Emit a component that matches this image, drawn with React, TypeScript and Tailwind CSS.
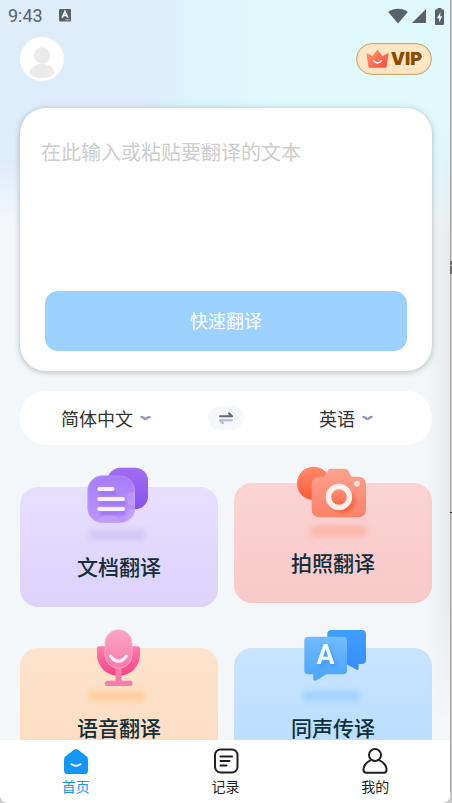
import { useState } from 'react'
import type { ReactNode } from 'react'

function StatusBar() {
  return (
    <div className="flex h-8 items-center pl-2 pr-[6px] text-[#5b6265]">
      <span className="font-['Roboto',sans-serif] text-[18px] leading-8">9:43</span>
      <svg className="ml-4 h-[14px] w-3" viewBox="0 0 12 14" aria-hidden="true">
        <rect width="12" height="12.5" rx="1" fill="currentColor" />
        <path d="M3.2 8.6 6 2.4l2.8 6.2M4.3 6.6h3.400" fill="none" stroke="#fff" strokeWidth="1.5" />
        <path d="M6.5 10.800h4" stroke="#dfecfa" strokeWidth="1" strokeDasharray="1 .6" />
      </svg>
      <div className="ml-auto flex items-center">
        <svg className="h-4 w-5" viewBox="0 0 20 16" fill="currentColor" aria-hidden="true">
          <path d="M10 15.500 .2 4C5.500-.3 14.500-.3 19.800 4z" />
        </svg>
        <svg className="ml-1 h-[14px] w-[14px]" viewBox="0 0 14 14" fill="currentColor" aria-hidden="true">
          <path d="M14 0v14H0z" />
        </svg>
        <svg className="ml-[9px] h-[17px] w-[9px]" viewBox="0 0 9 17" aria-hidden="true">
          <path d="M2.500 0h4v1.500H8q1 0 1 1V16q0 1-1 1H1q-1 0-1-1V2.500q0-1 1-1h1.500z" fill="currentColor" />
          <path d="M5.500 4 2 10.300h2.200V14.500l3-6.200H5.200z" fill="#e0fafc" />
        </svg>
      </div>
    </div>
  )
}

function Header() {
  return (
    <header className="flex items-center justify-between pt-[5px]">
      <button type="button" aria-label="我的" className="h-11 w-11 overflow-hidden rounded-full bg-white">
        <svg viewBox="0 0 44 44" fill="#ebebeb">
          <circle cx="22" cy="18.500" r="8.200" />
          <path d="M8.800 35.800C11.500 30 16 26.800 22 26.800s10.800 3.200 13.400 9C31.500 39.500 27 41.300 22 41.300s-9.500-1.800-13.200-5.500z" />
        </svg>
      </button>
      <button
        type="button"
        className="flex h-8 w-[76px] items-center justify-center gap-[2px] rounded-full border border-[#c9a873] bg-[#ffe6c4] shadow-[inset_0_0_2px_#d9bd8d]"
      >
        <svg className="h-[18px] w-[23px]" viewBox="0 0 23 18" aria-hidden="true">
          <defs>
            <linearGradient id="crown" x1="0" y1="0" x2="1" y2="1">
              <stop offset="0" stopColor="#ff9b6b" />
              <stop offset="1" stopColor="#fb4740" />
            </linearGradient>
          </defs>
          <path d="M.5 3.800q0-.8 1-.5L6.500 6l4.200-5.500q.8-.9 1.600 0L16.500 6l5-2.700q1-.3 1 .7L20.500 17q-.1.800-1 .800h-16q-.9 0-1-.8z" fill="url(#crown)" />
          <path d="M7.500 10.800q4 4.400 8 0" fill="none" stroke="#fff" strokeWidth="1.400" strokeLinecap="round" />
        </svg>
        <span className="font-['Inter',sans-serif] text-[18px] font-black leading-5 text-[#884c02]">VIP</span>
      </button>
    </header>
  )
}

function Chevron() {
  return (
    <svg className="pointer-events-none h-[6px] w-[11px]" viewBox="0 0 11 6" aria-hidden="true">
      <path d="M1.500 2q1.500 0 2.500 1.200 1.500 1.200 3 0Q8 2 9.500 2" fill="none" stroke="#9a9bb8" strokeWidth="2.600" strokeLinecap="round" />
    </svg>
  )
}

interface LanguageSelectProps {
  label: string
  value: string
  onChange: (value: string) => void
}

function LanguageSelect({ label, value, onChange }: LanguageSelectProps) {
  return (
    <label className="flex items-center gap-[7px]">
      <select
        aria-label={label}
        value={value}
        onChange={(e) => onChange(e.target.value)}
        className="field-sizing-content appearance-none bg-transparent pb-px text-[18px] leading-6 text-[#333] outline-none"
      >
        <option>简体中文</option>
        <option>英语</option>
      </select>
      <Chevron />
    </label>
  )
}

function LanguageBar() {
  const [from, setFrom] = useState('简体中文')
  const [to, setTo] = useState('英语')

  const swap = () => {
    setFrom(to)
    setTo(from)
  }

  return (
    <div className="mt-5 grid h-[54px] grid-cols-[1fr_auto_1fr] items-center rounded-[26px] bg-white">
      <div className="flex justify-center pr-4">
        <LanguageSelect label="源语言" value={from} onChange={setFrom} />
      </div>
      <button
        type="button"
        aria-label="交换语言"
        onClick={swap}
        className="flex h-6 w-9 items-center justify-center rounded-xl bg-[#f5f7fa]"
      >
        <svg className="h-[14px] w-[14px]" viewBox="0 0 14 14" fill="none" strokeWidth="2" strokeLinecap="round" strokeLinejoin="round">
          <path d="M1 5.300h12L10 2.300" stroke="#65667f" />
          <path d="M13 9.300H1l3 3" stroke="#b3b9c9" />
        </svg>
      </button>
      <div className="flex justify-center pl-4">
        <LanguageSelect label="目标语言" value={to} onChange={setTo} />
      </div>
    </div>
  )
}

interface FeatureCardProps {
  title: string
  className: string
  shadow: string
  shadowX?: number
  children: ReactNode
}

function FeatureCard({ title, className, shadow, shadowX = 20, children }: FeatureCardProps) {
  return (
    <button type="button" className={`flex h-[120px] flex-col items-center rounded-[18px] bg-linear-to-b ${className}`}>
      <svg className="-mt-6 h-[92px] w-[100px] shrink-0" viewBox="0 0 100 92" aria-hidden="true">
        <rect x={shadowX} y="67" width="56" height="10" rx="3" fill={shadow} filter="url(#soft)" />
        {children}
      </svg>
      <span className="text-[21px] font-medium leading-[22px] text-[#12303a]">{title}</span>
    </button>
  )
}

function Gradients() {
  const list = [
    ['docBack', '#a06df5', '#8a52e8'],
    ['docFront', '#a77cf8', '#bb97fb'],
    ['camBack', '#ff8a6b', '#fb5c35'],
    ['camFront', '#fca18f', '#fd8168'],
    ['camLens', '#ff9a84', '#fb6240'],
    ['micBack', '#fb7eb0', '#fc3f82'],
    ['micFront', '#fca4c6', '#f87cab'],
    ['talkBack', '#3f9ffd', '#3a8dff'],
    ['talkFront', '#71bbff', '#4aa5fb'],
  ]
  return (
    <svg className="absolute h-0 w-0" aria-hidden="true">
      <defs>
        {list.map(([id, top, bottom]) => (
          <linearGradient key={id} id={id} x1="0" y1="0" x2="0" y2="1">
            <stop offset="0" stopColor={top} />
            <stop offset="1" stopColor={bottom} />
          </linearGradient>
        ))}
        <filter id="soft" x="-30%" y="-100%" width="160%" height="300%">
          <feGaussianBlur stdDeviation="3" />
        </filter>
        <filter id="drop" x="-30%" y="-50%" width="160%" height="200%">
          <feGaussianBlur stdDeviation="1.800" />
        </filter>
        <clipPath id="docClip">
          <rect x="18.500" y="12.500" width="47.500" height="47.500" rx="15" />
        </clipPath>
      </defs>
    </svg>
  )
}

function DocIcon() {
  return (
    <>
      <rect x="38.500" y="4.700" width="40.500" height="41.600" rx="13" fill="url(#docBack)" />
      <rect x="18.500" y="12.500" width="47.500" height="47.500" rx="15" fill="url(#docFront)" />
      <g clipPath="url(#docClip)" fill="#c9adfc" opacity=".4">
        <circle cx="64" cy="36" r="7" />
        <circle cx="62" cy="53" r="7" />
        <circle cx="40" cy="66" r="14" />
      </g>
      <path d="M31 30h16M31 40h26M31 50h26" stroke="#8450e2" strokeWidth="4" opacity=".4" filter="url(#drop)" />
      <path d="M30.300 26h13.200M30.300 36H54M30.300 46H54" stroke="#f6f0ff" strokeWidth="4" strokeLinecap="round" />
      <rect x="19" y="13" width="46.500" height="46.500" rx="14.500" fill="none" stroke="#cdb4ff" strokeWidth=".8" opacity=".4" />
    </>
  )
}

function CameraIcon() {
  return (
    <>
      <circle cx="30.700" cy="24.400" r="16.700" fill="url(#camBack)" />
      <path
        d="M36.700 17.700H40q1.500 0 2.300-1.500l2.200-4.300q1-2.200 3.500-2.200h14q2.500 0 3.500 2.200l2.200 4.300q.8 1.500 2.300 1.500H75q8 0 8 8v24.600q0 8-8 8H36.700q-8 0-8-8V25.700q0-8 8-8z"
        fill="url(#camFront)"
      />
      <circle cx="60" cy="42" r="12" fill="#fb5630" opacity=".7" filter="url(#drop)" />
      <circle cx="56" cy="38" r="10.500" fill="url(#camLens)" stroke="#fff0ec" strokeWidth="5.400" />
      <circle cx="74" cy="24.700" r="2.900" fill="#ffe2da" />
    </>
  )
}

function MicIcon() {
  return (
    <>
      <path d="M28 24.300q0-2 2-2h39q2 0 2 2v6.200a21.500 21.500 0 0 1-43 0z" fill="url(#micBack)" />
      <path d="M46.500 43h6v13.700H61q2.500 0 2.500 2.700T61 62H38.500Q36 62 36 59.400t2.500-2.700h8z" fill="#f97dac" />
      <rect x="36" y="5.700" width="27" height="38.600" rx="13.500" fill="url(#micFront)" stroke="#fdb1cd" strokeWidth=".8" />
      <path d="M41.500 32q8 10.500 16 0" fill="none" stroke="#fff1f6" strokeWidth="3" strokeLinecap="round" />
    </>
  )
}

function TalkIcon() {
  return (
    <>
      <path d="M48.300 6H79q4 0 4 4v26q0 4-4 4h-3.500v4.500q0 2-2 1.200L63 40H48.300q-4 0-4-4V10q0-4 4-4z" fill="url(#talkBack)" />
      <path d="M25.300 12.700H60q4 0 4 4v29.600q0 4-4 4H43.500L33 56.500q-2.500.8-2.700-1.500v-4.700h-5q-4 0-4-4V16.700q0-4 4-4z" fill="url(#talkFront)" />
      <text
        x="42.500"
        y="40"
        textAnchor="middle"
        className="fill-[#f1f8ff] font-['Roboto',sans-serif] text-[27px] font-bold drop-shadow-[2px_3px_2px_rgba(31,123,232,0.5)]"
      >
        A
      </text>
    </>
  )
}

interface TabProps {
  label: string
  active?: boolean
  children: ReactNode
}

function Tab({ label, active = false, children }: TabProps) {
  return (
    <a
      href="#"
      aria-current={active ? 'page' : undefined}
      className={`flex flex-1 flex-col items-center text-[14px] leading-6 ${active ? 'text-[#1296fa]' : 'text-[#231f20]'}`}
    >
      <svg className="h-[26px] w-[26px]" viewBox="0 0 26 26" fill="none" stroke="currentColor" strokeWidth="2" strokeLinecap="round" aria-hidden="true">
        {children}
      </svg>
      {label}
    </a>
  )
}

function TabBar() {
  return (
    <nav className="flex h-[63px] shrink-0 bg-white pl-px pt-2">
      <Tab label="首页" active>
        <path
          d="M11 1.700q2-1.400 4 0l8.500 6.600Q25 9.500 25 11.500V22q0 4.500-4.500 4.500h-15Q1 26.500 1 22V11.500q0-2 1.500-3.200z"
          fill="currentColor"
          stroke="none"
        />
        <path d="M8.500 16.200q4.500 3.200 9 0" stroke="#fff" />
      </Tab>
      <Tab label="记录">
        <rect x="2" y="1.500" width="22.500" height="23" rx="5.500" />
        <path d="M7.500 8.500h11.500M7.500 13h9M7.500 17.500h6" />
      </Tab>
      <Tab label="我的">
        <circle cx="13" cy="7" r="6" />
        <path d="M8 12.700C4.300 14.500 1.500 18 1.500 22q0 2.800 2.800 2.800h17.400q2.800 0 2.800-2.800c0-4-2.800-7.500-6.500-9.300" />
      </Tab>
    </nav>
  )
}

export default function App() {
  const [text, setText] = useState('')

  return (
    <div className="relative h-screen overflow-hidden bg-[#c9c9c9] pr-[2px] font-['Noto_Sans_CJK_SC',sans-serif]">
      <div className="relative flex h-full flex-col overflow-hidden rounded-b-lg bg-[#f3f7fa]">
        <main className="min-h-0 flex-1 overflow-hidden bg-[linear-gradient(to_bottom,transparent_160px,#f3f7fa_222px),linear-gradient(to_right,#dfecfa_0,#dfecfa_145px,#dcf4fa_190px,#dcf6fa_235px,#e0fafc_270px,#e0fafc_100%)]">
          <Gradients />
          <StatusBar />
          <div className="pl-5 pr-[18px]">
            <Header />

            <section className="mt-[27px] rounded-[26px] bg-white px-[25px] pb-5 pt-[29px] shadow-[0_1px_6px_rgba(0,0,0,0.26)]">
              <textarea
                aria-label="翻译文本"
                value={text}
                onChange={(e) => setText(e.target.value)}
                placeholder="在此输入或粘贴要翻译的文本"
                className="-mx-1 block h-[154px] w-full resize-none bg-transparent text-[20px] leading-[30px] text-[#333] outline-none placeholder:text-[#cdcdcd]"
              />
              <button type="button" className="h-[60px] w-full rounded-[13px] bg-[#9bd1fc] pb-[2px] text-[18px] text-white">
                快速翻译
              </button>
            </section>

            <LanguageBar />

            <section className="mt-[38px] grid grid-cols-2 items-start gap-x-4 gap-y-[41px]">
              <div className="grid pt-1">
                <FeatureCard title="文档翻译" className="from-[#e7dfff] to-[#ddd2f9]" shadow="#d2c4f6">
                  <DocIcon />
                </FeatureCard>
              </div>
              <FeatureCard title="拍照翻译" className="from-[#fbd3d3] to-[#f8c9c9]" shadow="#fdb3a7" shadowX={28}>
                <CameraIcon />
              </FeatureCard>
              <FeatureCard title="语音翻译" className="from-[#fde4cc] to-[#fadcc0]" shadow="#ffcc9c">
                <MicIcon />
              </FeatureCard>
              <FeatureCard title="同声传译" className="from-[#c8e5ff] to-[#b8dcff]" shadow="#a0d1ff">
                <TalkIcon />
              </FeatureCard>
            </section>
          </div>
        </main>
        <TabBar />
        {/* Soft shade along the right edge */}
        <div className="pointer-events-none absolute bottom-[80px] right-0 top-[120px] w-6 bg-linear-to-r from-transparent to-black/5 mask-y-from-80%" />
      </div>
      {/* Window edge */}
      <svg className="absolute right-0 top-0 h-full w-[2px]" aria-hidden="true">
        <rect width="1" height="792" fill="#a8a8a8" />
        <path d="M1 261v4M1 266v8M0 512.500h2" stroke="#222" />
      </svg>
    </div>
  )
}
